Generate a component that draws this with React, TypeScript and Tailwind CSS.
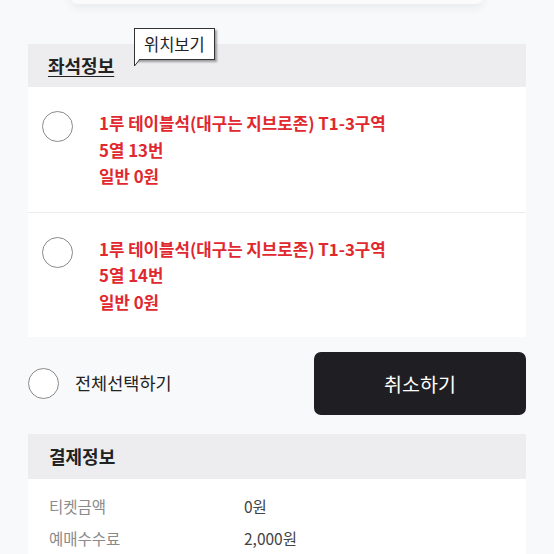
import React from "react";

const font = { fontFamily: '"Noto Sans CJK KR", "Noto Sans", sans-serif' };

function SeatRow({ seat, last }: { seat: string; last?: boolean }) {
  return (
    <div className={`flex items-start bg-white pl-[14px] pt-[23px] pb-[22px] ${last ? "" : "border-b border-[#ececef]"}`}>
      <div className="mt-[1px] h-[31px] w-[31px] shrink-0 rounded-full border-[1.5px] border-[#8a8a8a] bg-white" />
      <div className="ml-[26px] flex flex-col text-[16.8px] font-bold leading-[26.5px] text-[#e0282e]">
        <span>1루 테이블석(대구는 지브로존) T1-3구역</span>
        <span>{seat}</span>
        <span>일반 0원</span>
      </div>
    </div>
  );
}

export default function App() {
  return (
    <div className="min-h-[554px] w-[554px] overflow-hidden bg-[#f8f9fb]" style={font}>
      <div className="mx-[70px] -mt-[20px] h-[24px] rounded-b-lg bg-[#fbfbfc] shadow-[0_4px_10px_rgba(0,0,0,0.06)]" />
      <div className="relative mx-[28px] mt-[40px]">
        <div className="flex h-[43px] items-center bg-[#ededf0] pl-[20px]">
          <span className="text-[18px] font-bold text-[#222] underline underline-offset-[3px]">좌석정보</span>
        </div>
        <div className="absolute left-[106px] top-[-16px] z-10">
          <div className="relative border border-[#333] bg-white px-[9px] py-[2px] text-[16.5px] leading-[26px] text-[#222] shadow-[2px_2px_2px_rgba(0,0,0,0.35)]">
            위치보기
            <svg className="absolute left-[-1px] top-full" width="8" height="8" viewBox="0 0 8 8">
              <path d="M0.5 0 L0.5 7 L6 0" fill="white" stroke="#333" strokeWidth="1" />
            </svg>
          </div>
        </div>
        <SeatRow seat="5열 13번" />
        <SeatRow seat="5열 14번" last />
      </div>
      <div className="mx-[28px] mt-[15px] flex items-center justify-between">
        <div className="flex items-center">
          <div className="h-[31px] w-[31px] rounded-full border-[1.5px] border-[#8a8a8a] bg-white" />
          <span className="ml-[16px] text-[17.5px] text-[#222]">전체선택하기</span>
        </div>
        <button className="flex h-[63px] w-[212px] items-center justify-center rounded-[7px] bg-[#1f1f23] text-[19.5px] text-white">
          취소하기
        </button>
      </div>
      <div className="mx-[28px] mt-[19px]">
        <div className="flex h-[45px] items-center bg-[#ededf0] pl-[21px]">
          <span className="text-[18px] font-bold text-[#222]">결제정보</span>
        </div>
        <div className="bg-white pl-[21px] pt-[11px] pb-[20px] text-[15.5px] leading-[32px]">
          <div className="flex">
            <span className="w-[195px] text-[#8a8a8a]">티켓금액</span>
            <span className="text-[#444]">0원</span>
          </div>
          <div className="flex">
            <span className="w-[195px] text-[#8a8a8a]">예매수수료</span>
            <span className="text-[#444]">2,000원</span>
          </div>
        </div>
      </div>
    </div>
  );
}
